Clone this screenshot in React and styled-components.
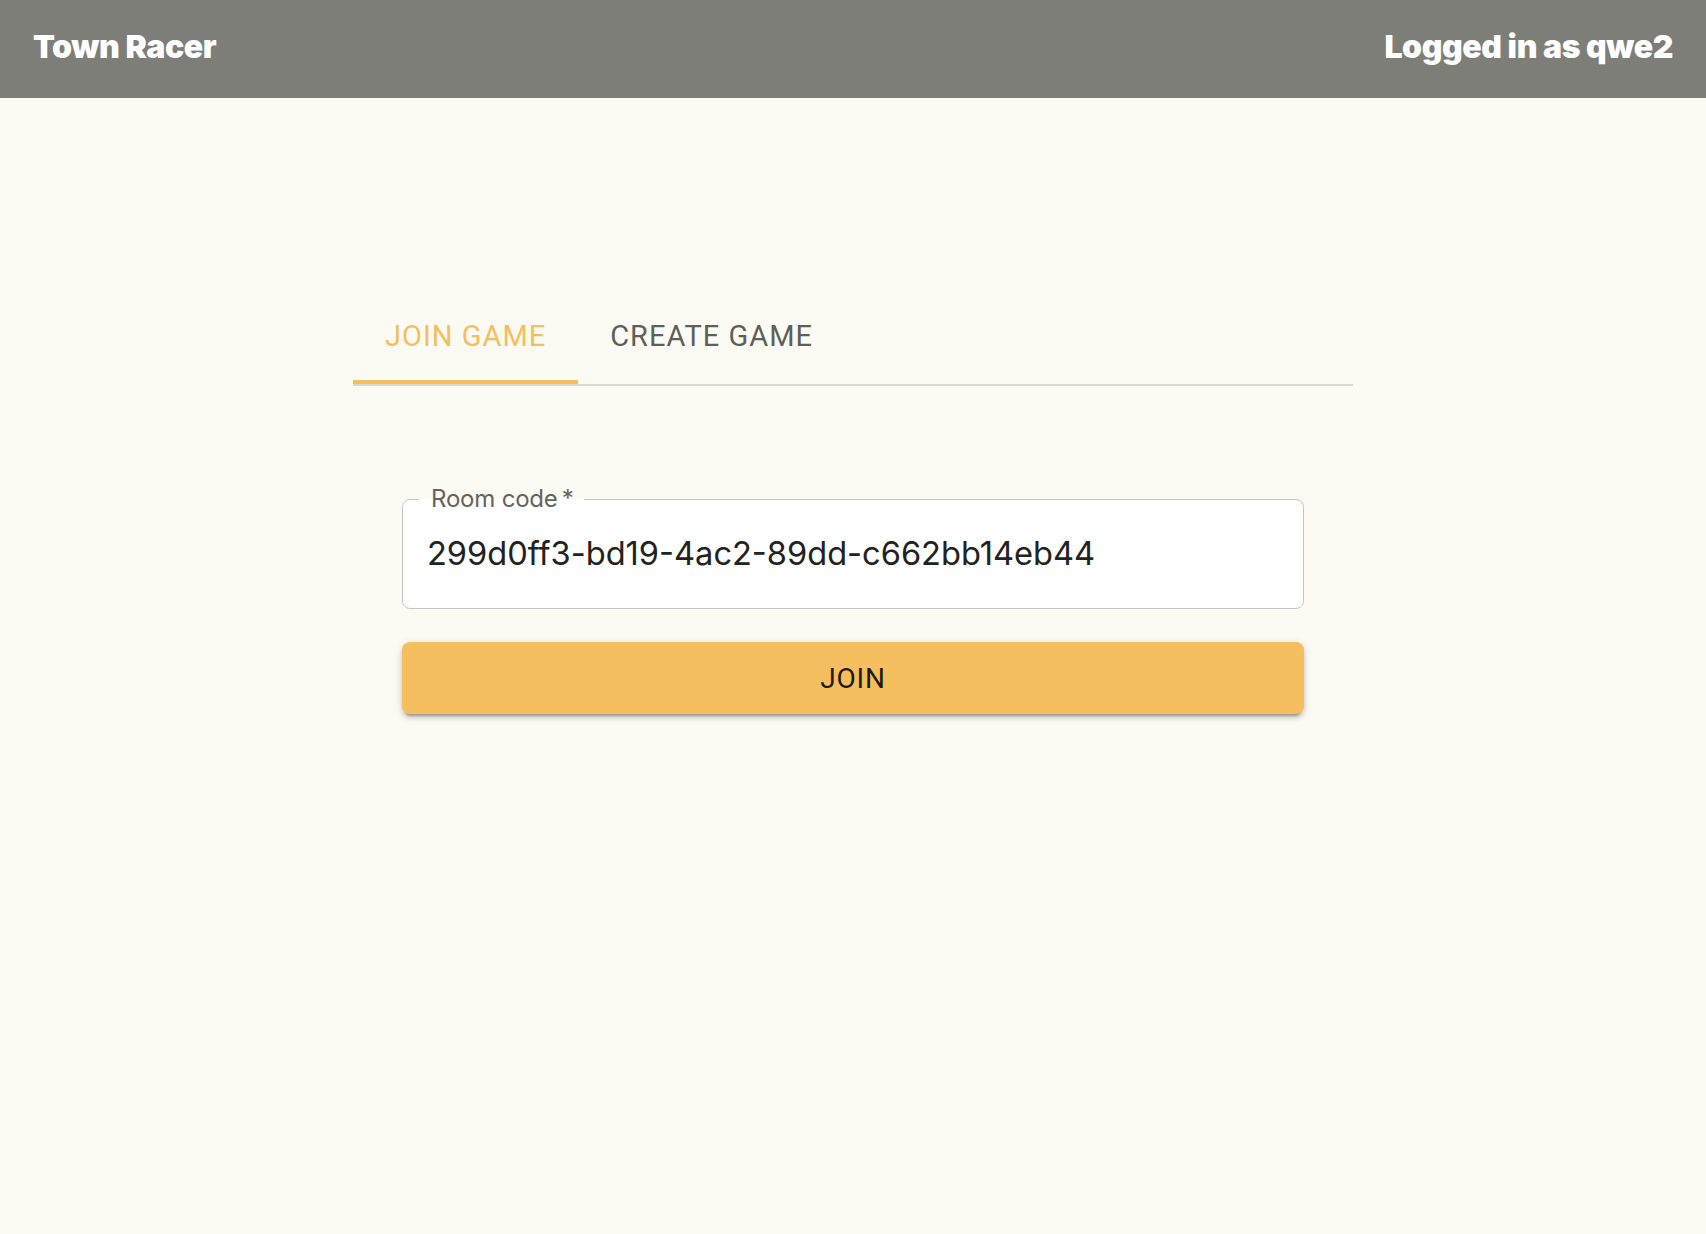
import React, { useState } from 'react';
import styled, { createGlobalStyle } from 'styled-components';

const GlobalStyle = createGlobalStyle`
  html, body {
    margin: 0;
    padding: 0;
    background: #fcfbf3;
  }
  body {
    font-family: Inter, "Liberation Sans", sans-serif;
  }
`;

const Page = styled.div`
  min-height: 1234px;
  background: #fcfbf3;
`;

const TopBar = styled.header`
  height: 98px;
  background: #7e7e79;
  display: flex;
  align-items: center;
  justify-content: space-between;
  padding: 0 33px 0 33px;
  box-sizing: border-box;
`;

const BarText = styled.span`
  color: #ffffff;
  font-family: Inter, "Liberation Sans", sans-serif;
  font-weight: 900;
  font-size: 32px;
  letter-spacing: -0.4px;
  line-height: 1;
  margin-bottom: 4px;
`;

const Main = styled.main`
  display: flex;
  flex-direction: column;
  align-items: center;
  padding-top: 190px;
`;

const TabBar = styled.div`
  width: 1000px;
  display: flex;
  border-bottom: 2px solid #dcdbd3;
`;

const Tab = styled.button`
  height: 96px;
  padding: 0 32px;
  margin: 0;
  border: none;
  background: transparent;
  position: relative;
  cursor: pointer;
  font-family: Roboto, "Liberation Sans", sans-serif;
  font-weight: 400;
  font-size: 29px;
  letter-spacing: 1px;
  text-transform: uppercase;
  color: ${(p) => (p.$active ? '#f5be5f' : '#5f5f5a')};

  &::after {
    content: '';
    position: absolute;
    left: 0;
    right: 0;
    bottom: 0;
    height: 4px;
    background: ${(p) => (p.$active ? '#f5be5f' : 'transparent')};
  }
`;

const Form = styled.form`
  width: 902px;
  margin-top: 101px;
  display: flex;
  flex-direction: column;
  gap: 33px;
`;

const Field = styled.fieldset`
  margin: 0;
  padding: 0 0 13px 16px;
  min-width: 0;
  border: 1.5px solid #c4c4c4;
  border-radius: 8px;
  background: #ffffff;
`;

const Legend = styled.legend`
  padding: 0 10px 0 12px;
  font-family: Inter, "Liberation Sans", sans-serif;
  font-size: 24px;
  line-height: 24px;
  color: #64645e;
  letter-spacing: -0.2px;
`;

const CodeInput = styled.input`
  display: block;
  width: 100%;
  height: 84px;
  box-sizing: border-box;
  border: none;
  outline: none;
  background: transparent;
  padding: 0 8px 0 8px;
  font-family: Inter, "Liberation Sans", sans-serif;
  font-size: 32.6px;
  color: #222220;
`;

const JoinButton = styled.button`
  height: 72px;
  border: none;
  border-radius: 8px;
  background: #f5be5f;
  color: #1f1b12;
  font-family: Roboto, "Liberation Sans", sans-serif;
  font-weight: 400;
  font-size: 28px;
  letter-spacing: 0.8px;
  text-transform: uppercase;
  cursor: pointer;
  box-shadow: 0 6px 2px -4px rgba(0, 0, 0, 0.2), 0 4px 4px 0 rgba(0, 0, 0, 0.14),
    0 2px 10px 0 rgba(0, 0, 0, 0.12);
`;

const App = () => {
  const [tab, setTab] = useState('join');
  const [code, setCode] = useState('299d0ff3-bd19-4ac2-89dd-c662bb14eb44');

  return (
    <Page>
      <GlobalStyle />
      <TopBar>
        <BarText>Town Racer</BarText>
        <BarText>Logged in as qwe2</BarText>
      </TopBar>
      <Main>
        <TabBar>
          <Tab $active={tab === 'join'} onClick={() => setTab('join')}>Join game</Tab>
          <Tab $active={tab === 'create'} onClick={() => setTab('create')}>Create game</Tab>
        </TabBar>
        <Form onSubmit={(e) => e.preventDefault()}>
          <Field>
            <Legend>Room code&thinsp;*</Legend>
            <CodeInput value={code} onChange={(e) => setCode(e.target.value)} />
          </Field>
          <JoinButton type="submit">Join</JoinButton>
        </Form>
      </Main>
    </Page>
  );
};

export default App;
